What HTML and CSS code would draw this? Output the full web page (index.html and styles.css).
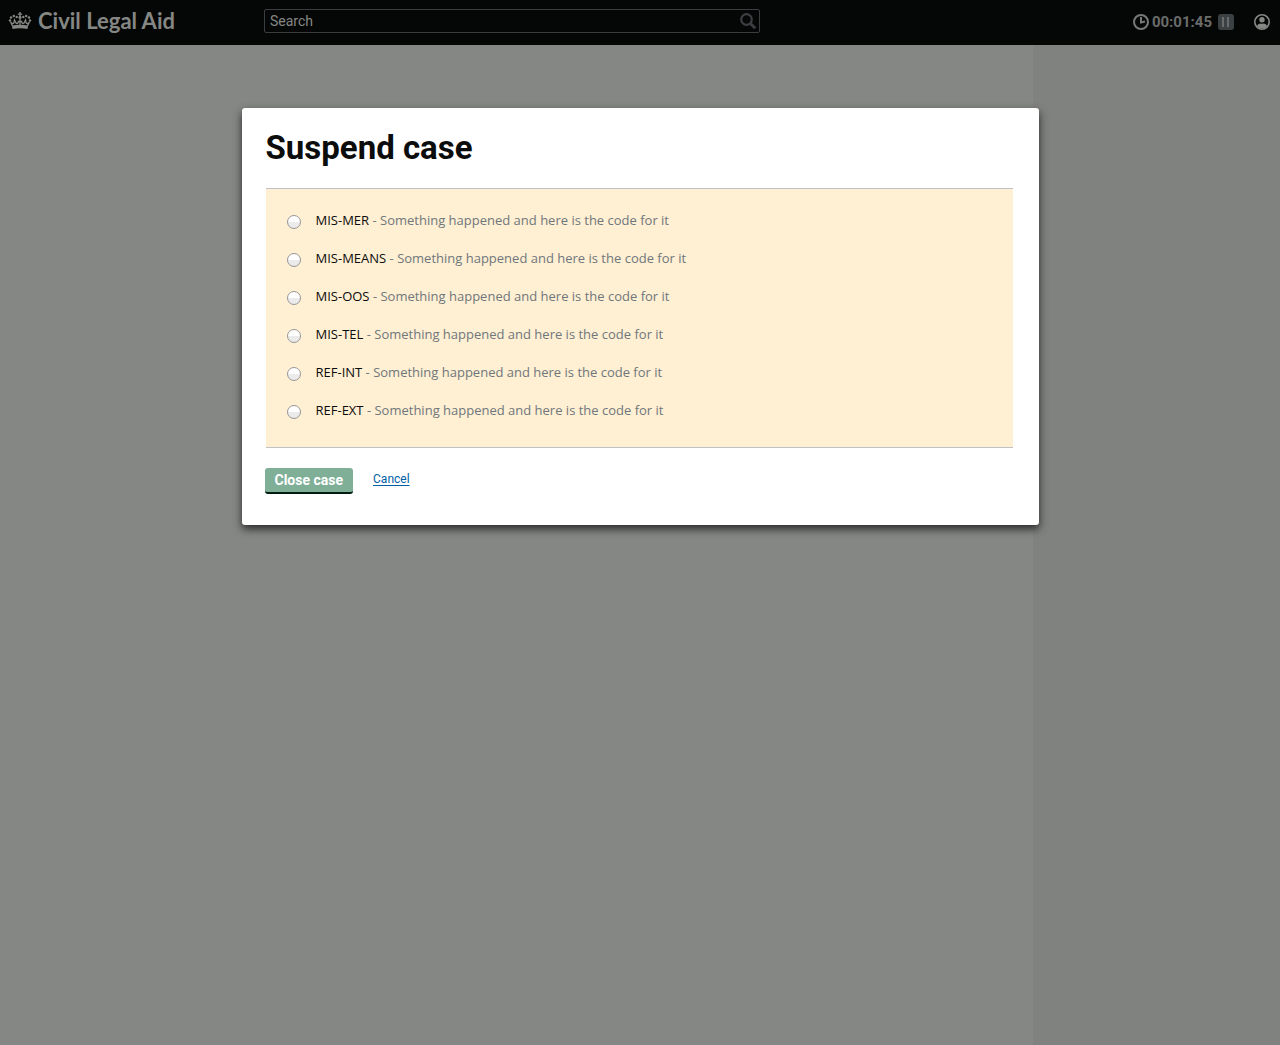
FILE: index.html
```html
<!DOCTYPE html>
<html lang="en">
<head>
<meta charset="utf-8">
<meta name="viewport" content="width=device-width, initial-scale=1">
<title>Civil Legal Aid</title>
<link rel="stylesheet" href="styles.css">
</head>
<body>
<header class="topbar">
  <a class="brand" href="#">
    <svg class="crown" width="24" height="18" viewBox="0 0 24 18" aria-hidden="true">
      <g fill="currentColor">
        <circle cx="2" cy="8.500" r="1.200"/><circle cx="3" cy="5.500" r="1.200"/><circle cx="5.800" cy="4" r="1.200"/><circle cx="8.700" cy="5" r="1.200"/>
        <circle cx="22" cy="8.500" r="1.200"/><circle cx="21" cy="5.500" r="1.200"/><circle cx="18.200" cy="4" r="1.200"/><circle cx="15.300" cy="5" r="1.200"/>
        <path d="M11.300 0h1.400v1.400h1.500v1.300h-1.500v1.200h-1.400V2.700H9.800V1.400h1.500z"/>
        <circle cx="12" cy="5.300" r="1.500"/>
        <path d="M4 13.500Q12 12 20 13.500L19.500 17Q12 15.400 4.500 17z"/>
      </g>
      <path d="M4.500 14L2.500 9.800Q4.500 12.500 5.800 11L6.500 8L8 11Q9.500 12.500 10.500 9.500M19.500 14L21.500 9.800Q19.500 12.500 18.200 11L17.500 8L16 11Q14.500 12.500 13.500 9.500M12 13V6M9.800 9.500H14.200" fill="none" stroke="currentColor" stroke-width="1.300"/>
    </svg>
    <span>Civil Legal Aid</span>
  </a>
  <form class="search" role="search">
    <input class="search-input" type="search" placeholder="Search" aria-label="Search">
    <button class="icon-button" type="button" aria-label="Run search">
      <svg width="16" height="16" viewBox="0 0 16 16" fill="none" stroke="currentColor" aria-hidden="true"><circle cx="6.500" cy="6.500" r="5.300" stroke-width="2.200"/><path d="M10.200 10.200L15.200 15.200" stroke-width="3"/></svg>
    </button>
  </form>
  <div class="status">
    <svg class="clock" width="16" height="16" viewBox="0 0 16 16" fill="none" stroke="currentColor" stroke-width="2" aria-hidden="true"><circle cx="8" cy="8" r="7"/><path d="M8 3V8.500L12 7.500"/></svg>
    <time class="timer">00:01:45</time>
    <button class="pause" type="button" aria-label="Pause timer">
      <svg width="16" height="16" viewBox="0 0 16 16" fill="currentColor" aria-hidden="true"><path d="M4 3h2v10H4zM9 3h2v10H9z"/></svg>
    </button>
    <button class="icon-button account" type="button" aria-label="Account">
      <svg width="16" height="16" viewBox="0 0 16 16" aria-hidden="true"><circle cx="8" cy="8" r="7.200" fill="none" stroke="currentColor" stroke-width="1.600"/><circle cx="8" cy="5.800" r="2.700" fill="currentColor"/><path d="M2.800 12Q4 9.600 6.200 9.400Q8 10.300 9.800 9.400Q12 9.600 13.200 12Q11 14.800 8 14.800Q5 14.800 2.800 12z" fill="currentColor"/></svg>
    </button>
  </div>
</header>
<div class="page">
  <main class="content"></main>
  <aside class="sidebar"></aside>
</div>
<div class="overlay">
  <form class="modal" role="dialog" aria-modal="true" aria-labelledby="modal-title">
    <h1 class="modal-title" id="modal-title">Suspend case</h1>
    <div class="options" role="radiogroup" aria-labelledby="modal-title">
      <label class="option"><input class="radio" type="radio" name="code"><span>MIS-MER <span class="description">- Something happened and here is the code for it</span></span></label>
      <label class="option"><input class="radio" type="radio" name="code"><span>MIS-MEANS <span class="description">- Something happened and here is the code for it</span></span></label>
      <label class="option"><input class="radio" type="radio" name="code"><span>MIS-OOS <span class="description">- Something happened and here is the code for it</span></span></label>
      <label class="option"><input class="radio" type="radio" name="code"><span>MIS-TEL <span class="description">- Something happened and here is the code for it</span></span></label>
      <label class="option"><input class="radio" type="radio" name="code"><span>REF-INT <span class="description">- Something happened and here is the code for it</span></span></label>
      <label class="option"><input class="radio" type="radio" name="code"><span>REF-EXT <span class="description">- Something happened and here is the code for it</span></span></label>
    </div>
    <div class="actions">
      <button class="submit" type="button">Close case</button>
      <a class="cancel" href="#">Cancel</a>
    </div>
  </form>
</div>
</body>
</html>
```
FILE: styles.css
```css
* { box-sizing: border-box; }

body {
  display: flex;
  flex-direction: column;
  min-height: 100vh;
  margin: 0;
  background: #858784;
  color: #0b0c0c;
  font: 14px/20px Roboto, "Liberation Sans", sans-serif;
}

.topbar {
  display: grid;
  grid-template-columns: 256px minmax(0, 496px) 1fr;
  column-gap: 8px;
  align-items: start;
  height: 45px;
  padding: 9px 10px 0 0;
  background: #050706;
  color: #858784;
}

.brand {
  display: flex;
  align-items: center;
  gap: 6px;
  padding-left: 8px;
  color: #858784;
  font: 700 22px/24px Lato, sans-serif;
  text-decoration: none;
}

.search {
  display: flex;
  align-items: center;
  height: 24px;
  padding: 0 3px 0 5px;
  border: 1px solid #3b3e40;
  border-radius: 2px;
}

.search-input {
  flex: 1;
  min-width: 0;
  padding: 0;
  border: 0;
  outline: 0;
  background: transparent;
  color: #858784;
  font: inherit;
}

.search-input::placeholder { color: #858784; opacity: 1; }

.icon-button,
.pause {
  display: flex;
  padding: 0;
  border: 0;
  background: none;
  color: #3b3e40;
}

.status {
  display: flex;
  align-items: center;
  justify-content: flex-end;
  height: 26px;
  color: #6a6c6a;
}

.clock { margin-right: 3px; color: #777977; }

.timer { font-size: 15px; font-weight: 700; }

.pause {
  margin-left: 6px;
  border-radius: 3px;
  background: #3b4043;
  color: #686b6c;
}

.account { margin-left: 20px; color: #858784; }

.page { display: flex; flex: 1; }

.content { flex: 1; }

.sidebar { width: 247px; background: #80827f; }

.overlay {
  position: absolute;
  inset: 0;
  padding: 108px 16px 16px;
}

.modal {
  max-width: 797px;
  margin: 0 auto;
  padding: 20px 26px 31px 24px;
  border-radius: 3px;
  background: #fff;
  box-shadow: 0 4px 8px rgba(0, 0, 0, 0.7);
}

.modal-title {
  margin: 0 0 20px;
  font: 700 33px/40px Roboto, sans-serif;
}

.options {
  display: grid;
  gap: 18px;
  padding: 21px 21px 27px;
  border: solid #bfc1c3;
  border-width: 1px 0;
  background: #ffefd3;
  font-family: "Open Sans", sans-serif;
  font-size: 13px;
}

.option { display: flex; align-items: center; gap: 15px; }

.radio {
  appearance: none;
  flex: none;
  width: 14px;
  height: 14px;
  margin: 4px 0 0;
  border: 1px solid #969696;
  border-radius: 50%;
  background: linear-gradient(#fff 50%, #ebebeb 50%);
}

.description { color: #6f777b; }

.actions {
  display: flex;
  align-items: flex-start;
  gap: 20px;
  margin: 20px 0 0 -1px;
}

.submit {
  height: 26px;
  padding: 0 10px;
  border: 0;
  border-bottom: 2px solid #001b10;
  border-radius: 3px;
  background: #80af98;
  color: #fff;
  font: 700 14px/24px Roboto, sans-serif;
}

.cancel {
  color: #005ea5;
  font-size: 12px;
  line-height: 22px;
  text-underline-offset: 2px;
}
```
